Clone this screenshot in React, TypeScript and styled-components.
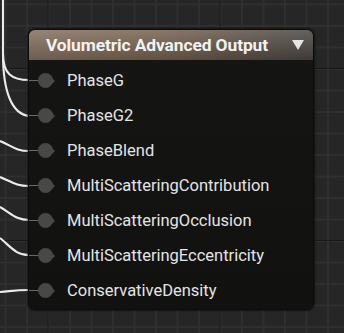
import React from 'react';
import styled, { createGlobalStyle } from 'styled-components';

const GlobalStyle = createGlobalStyle`
  html, body {
    margin: 0;
    padding: 0;
    background: #242424;
  }
`;

const pins = [
  'PhaseG',
  'PhaseG2',
  'PhaseBlend',
  'MultiScatteringContribution',
  'MultiScatteringOcclusion',
  'MultiScatteringEccentricity',
  'ConservativeDensity',
];

// wires coming in from nodes off screen
const wires = [
  'M3,0 L3,54 C3,74 12,80 29,80',
  'M3,54 C3,92 12,114 29,116',
  'M0,141 C12,146 16,151 29,151',
  'M0,177 C12,182 16,186 29,186',
  'M0,207 C12,214 16,220 29,220',
  'M0,238 C12,248 16,255 29,255',
  'M0,292 C12,291 16,290 29,290',
];

function App() {
  return (
    <>
      <GlobalStyle />
      <Canvas>
        <Wires width="344" height="333" viewBox="0 0 344 333">
          {wires.map((d, i) => (
            <path key={i} d={d} />
          ))}
        </Wires>
        <Node>
          <NodeHeader>
            <span className="title">Volumetric Advanced Output</span>
            <Arrow />
          </NodeHeader>
          <NodeBody>
            {pins.map((name) => (
              <PinRow key={name}>
                <Pin />
                <span className="label">{name}</span>
              </PinRow>
            ))}
          </NodeBody>
        </Node>
      </Canvas>
    </>
  );
}

export default App;

const Canvas = styled.div`
  position: relative;
  width: 344px;
  height: 333px;
  overflow: hidden;
  background-color: #262626;
  background-image:
    linear-gradient(to right, #181818 1.5px, transparent 1.5px),
    linear-gradient(to bottom, #181818 1.5px, transparent 1.5px),
    linear-gradient(to right, #2f2f2f 1.5px, transparent 1.5px),
    linear-gradient(to bottom, #2f2f2f 1.5px, transparent 1.5px);
  background-size: 172px 172px, 172px 172px, 21.5px 21.5px, 21.5px 21.5px;
  background-position: 47.5px 68px, 47.5px 68px, 4.5px 3.5px, 4.5px 3.5px;
  font-family: Roboto, 'Liberation Sans', sans-serif;
`;

const Wires = styled.svg`
  position: absolute;
  left: 0;
  top: 0;

  path {
    fill: none;
    stroke: #ececec;
    stroke-width: 2.1;
  }
`;

const Node = styled.div`
  position: absolute;
  left: 28px;
  top: 29px;
  width: 286px;
  height: 281px;
  box-sizing: border-box;
  display: flex;
  flex-direction: column;
  border-radius: 7px;
  background: linear-gradient(to bottom, #151614, #111210);
  border: 1px solid #0b0b0a;
  box-shadow: 0 0 2px 1px rgba(0, 0, 0, 0.5);
  overflow: hidden;
`;

const NodeHeader = styled.div`
  height: 30px;
  flex-shrink: 0;
  display: flex;
  align-items: center;
  justify-content: space-between;
  padding: 0 8px 0 17px;
  background:
    linear-gradient(to bottom, rgba(255, 255, 255, 0.14), rgba(0, 0, 0, 0.18)),
    linear-gradient(to right, #867260 0%, #776350 45%, #5e5248 75%, #4a4743 100%);

  .title {
    color: #f2f2f2;
    font-size: 17.4px;
    font-weight: 700;
    letter-spacing: -0.1px;
  }
`;

const Arrow = styled.div`
  width: 0;
  height: 0;
  border-left: 6.5px solid transparent;
  border-right: 6.5px solid transparent;
  border-top: 10px solid #e6e6e6;
  margin-right: 1px;
`;

const NodeBody = styled.div`
  display: flex;
  flex-direction: column;
  padding-top: 3px;
`;

const PinRow = styled.div`
  height: 35px;
  display: flex;
  align-items: center;
  position: relative;

  &::before {
    content: '';
    position: absolute;
    left: 0;
    top: 50%;
    width: 10px;
    height: 1.5px;
    margin-top: -1px;
    background: #6a6a6a;
  }

  .label {
    color: #e4e4e4;
    font-size: 16.5px;
    margin-left: 14px;
  }
`;

const Pin = styled.div`
  position: relative;
  margin-left: 9px;
  width: 15px;
  height: 15px;
  border-radius: 50%;
  background: #484848;

  &::after {
    content: '';
    position: absolute;
    left: 13.5px;
    top: 4.5px;
    border-top: 3px solid transparent;
    border-bottom: 3px solid transparent;
    border-left: 3.5px solid #484848;
  }
`;
